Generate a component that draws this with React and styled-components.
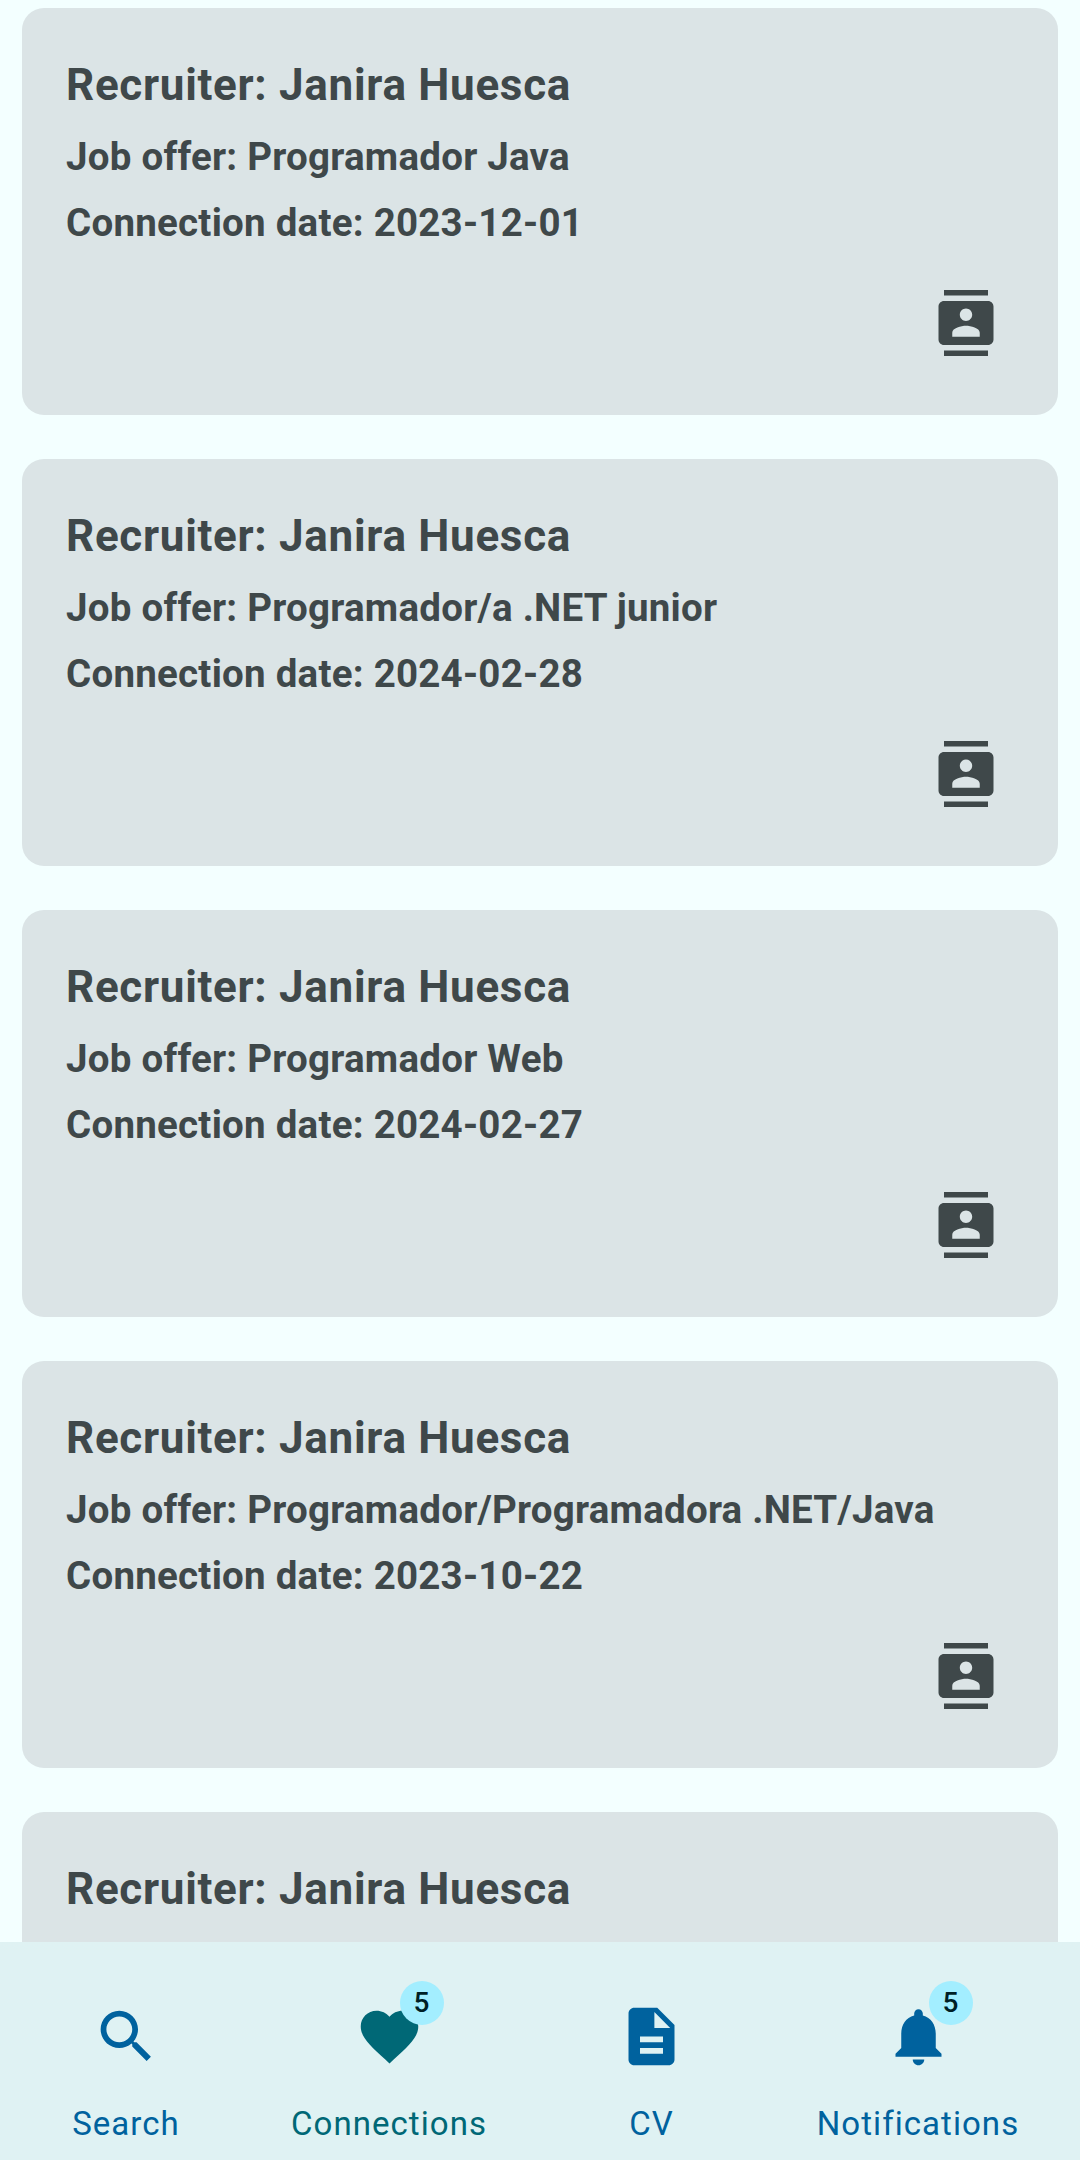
import React from "react";
import styled, { createGlobalStyle } from "styled-components";

const GlobalStyle = createGlobalStyle`
  * { box-sizing: border-box; }
  body { margin: 0; background: #f3ffff; }
`;

const Screen = styled.div`
  width: 1080px;
  height: 2160px;
  display: flex;
  flex-direction: column;
  overflow: hidden;
  background: #f3ffff;
  font-family: Roboto, sans-serif;
`;

const List = styled.main`
  flex: 1;
  min-height: 0;
  overflow: hidden;
  display: flex;
  flex-direction: column;
  gap: 44px;
  padding: 8px 22px 0;
`;

const Card = styled.article`
  flex: none;
  height: 407px;
  display: flex;
  flex-direction: column;
  padding: 44px;
  border-radius: 22px;
  background: #dbe4e6;
  color: #3f484a;
`;

const Recruiter = styled.h2`
  margin: 0 0 6px;
  font-size: 44px;
  line-height: 66px;
  font-weight: 700;
  letter-spacing: 0.7px;
  white-space: nowrap;
`;

const Detail = styled.p`
  margin: 0;
  font-size: 38.5px;
  line-height: 66px;
  font-weight: 700;
  letter-spacing: 0.24px;
  white-space: nowrap;
`;

const ContactButton = styled.button`
  align-self: flex-end;
  margin: 34px 15px 0 0;
  padding: 0;
  border: 0;
  background: none;
  color: inherit;
  line-height: 0;
`;

const Nav = styled.nav`
  flex: none;
  height: 218px;
  display: grid;
  grid-template-columns: 252px 274px 251px 282px;
  padding-top: 60px;
  background: #dff2f3;
`;

const NavItem = styled.a`
  display: flex;
  flex-direction: column;
  align-items: center;
  gap: 33px;
  color: ${(p) => (p.$active ? "#006876" : "#00629e")};
`;

const IconBox = styled.span`
  position: relative;
  display: flex;
  width: 69px;
  height: 69px;
`;

const Badge = styled.span`
  position: absolute;
  left: 45px;
  top: -21px;
  width: 44px;
  height: 44px;
  border-radius: 50%;
  background: #a3eeff;
  color: #001f25;
  font-size: 28px;
  line-height: 43px;
  font-weight: 500;
  text-align: center;
`;

const Label = styled.span`
  font-size: 33px;
  line-height: 40px;
  letter-spacing: 1.05px;
  white-space: nowrap;
`;

const PATHS = {
  contacts: "M20 0H4v2h16V0zM4 24h16v-2H4v2zM20 4H4c-1.1 0-2 .9-2 2v12c0 1.1.9 2 2 2h16c1.1 0 2-.9 2-2V6c0-1.1-.9-2-2-2zm-8 2.75c1.24 0 2.25 1.01 2.25 2.25s-1.01 2.25-2.25 2.25S9.75 10.24 9.75 9 10.76 6.75 12 6.75zM17 17H7v-1.5c0-1.67 3.33-2.5 5-2.5s5 .83 5 2.5V17z",
  search: "M15.5 14h-.79l-.28-.27C15.41 12.59 16 11.11 16 9.5 16 5.91 13.09 3 9.5 3S3 5.91 3 9.5 5.91 16 9.5 16c1.61 0 3.09-.59 4.23-1.57l.27.28v.79l5 4.99L20.49 19l-4.99-5zm-6 0C7.01 14 5 11.99 5 9.5S7.01 5 9.5 5 14 7.01 14 9.5 11.99 14 9.5 14z",
  heart: "M12 21.35l-1.45-1.32C5.4 15.36 2 12.28 2 8.5 2 5.42 4.42 3 7.5 3c1.74 0 3.41.81 4.5 2.09C13.09 3.81 14.76 3 16.5 3 19.58 3 22 5.42 22 8.5c0 3.78-3.4 6.86-8.55 11.54L12 21.35z",
  file: "M14 2H6c-1.1 0-1.99.9-1.99 2L4 20c0 1.1.89 2 1.99 2H18c1.1 0 2-.9 2-2V8l-6-6zm2 16H8v-2h8v2zm0-4H8v-2h8v2zm-3-5V3.5L18.5 9H13z",
  bell: "M12 22c1.1 0 2-.9 2-2h-4c0 1.1.89 2 2 2zm6-6v-5c0-3.07-1.64-5.64-4.5-6.32V4c0-.83-.67-1.5-1.5-1.5s-1.5.67-1.5 1.5v.68C7.63 5.36 6 7.92 6 11v5l-2 2v1h16v-1l-2-2z",
};

const Icon = ({ name, size }) => (
  <svg width={size} height={size} viewBox="0 0 24 24" fill="currentColor" aria-hidden="true">
    <path d={PATHS[name]} />
  </svg>
);

const connections = [
  { offer: "Programador Java", date: "2023-12-01" },
  { offer: "Programador/a .NET junior", date: "2024-02-28" },
  { offer: "Programador Web", date: "2024-02-27" },
  { offer: "Programador/Programadora .NET/Java", date: "2023-10-22" },
  { offer: "", date: "" },
];

const tabs = [
  { label: "Search", icon: "search" },
  { label: "Connections", icon: "heart", badge: 5, active: true },
  { label: "CV", icon: "file" },
  { label: "Notifications", icon: "bell", badge: 5 },
];

export default function App() {
  return (
    <Screen>
      <GlobalStyle />
      <List>
        {connections.map((c, i) => (
          <Card key={i}>
            <Recruiter>Recruiter: Janira Huesca</Recruiter>
            {c.offer && (
              <>
                <Detail>Job offer: {c.offer}</Detail>
                <Detail>Connection date: {c.date}</Detail>
                <ContactButton aria-label="Contact">
                  <Icon name="contacts" size={66} />
                </ContactButton>
              </>
            )}
          </Card>
        ))}
      </List>
      <Nav>
        {tabs.map((t) => (
          <NavItem key={t.label} $active={t.active}>
            <IconBox>
              <Icon name={t.icon} size={69} />
              {t.badge && <Badge>{t.badge}</Badge>}
            </IconBox>
            <Label>{t.label}</Label>
          </NavItem>
        ))}
      </Nav>
    </Screen>
  );
}
